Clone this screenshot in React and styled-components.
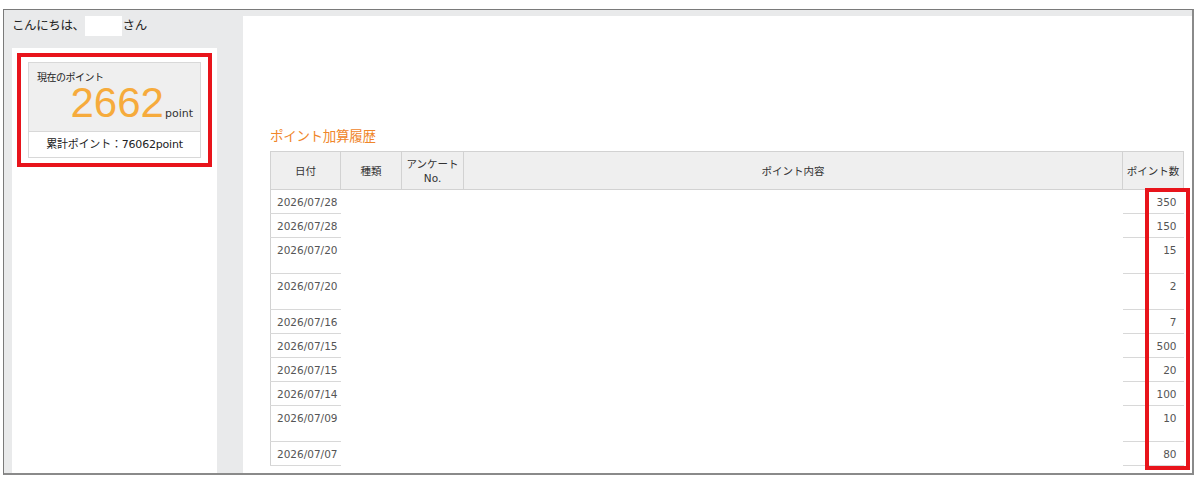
import React from "react";
import styled, { createGlobalStyle } from "styled-components";

const rows = [
  { date: "2026/07/28", point: 350 },
  { date: "2026/07/28", point: 150 },
  { date: "2026/07/20", point: 15, tall: true },
  { date: "2026/07/20", point: 2, tall: true },
  { date: "2026/07/16", point: 7 },
  { date: "2026/07/15", point: 500 },
  { date: "2026/07/15", point: 20 },
  { date: "2026/07/14", point: 100 },
  { date: "2026/07/09", point: 10, tall: true },
  { date: "2026/07/07", point: 80 },
];

export default function App() {
  return (
    <>
      <GlobalStyle />
      <Frame>
        <LeftColumn>
          <Greeting>
            こんにちは、<NameBox />さん
          </Greeting>
          <Sidebar>
            <Highlight>
              <PointCard>
                <PointTop>
                  <PointLabel>現在のポイント</PointLabel>
                  <PointValue>
                    2662<Unit>point</Unit>
                  </PointValue>
                </PointTop>
                <PointTotal>累計ポイント：76062point</PointTotal>
              </PointCard>
            </Highlight>
          </Sidebar>
        </LeftColumn>

        <Main>
          <Title>ポイント加算履歴</Title>
          <Table>
            <colgroup>
              <col style={{ width: 70 }} />
              <col style={{ width: 61 }} />
              <col style={{ width: 62 }} />
              <col />
              <col style={{ width: 61 }} />
            </colgroup>
            <thead>
              <tr>
                <Th>日付</Th>
                <Th>種類</Th>
                <Th>
                  アンケート
                  <br />
                  No.
                </Th>
                <Th>ポイント内容</Th>
                <Th>ポイント数</Th>
              </tr>
            </thead>
            <tbody>
              {rows.map((r, i) => (
                <Row key={i} $tall={r.tall}>
                  <DateCell>{r.date}</DateCell>
                  <Td />
                  <Td />
                  <Td />
                  <NumCell>{r.point}</NumCell>
                </Row>
              ))}
            </tbody>
          </Table>
          <ColumnMark />
        </Main>
      </Frame>
    </>
  );
}

const GlobalStyle = createGlobalStyle`
  body {
    margin: 0;
    background: #ffffff;
    font-family: "DejaVu Sans", "Noto Sans CJK JP", sans-serif;
    color: #333;
  }
`;

const Frame = styled.div`
  box-sizing: border-box;
  margin: 9px 0 0 3px;
  width: 1191px;
  height: 466px;
  display: flex;
  padding: 6px 0 0 8px;
  background: #e9eaeb;
  border-top: 1px solid #7a7a7a;
  border-left: 1px solid #7a7a7a;
  border-right: 2px solid #8a8a8a;
  border-bottom: 2px solid #8a8a8a;
  overflow: hidden;
`;

const LeftColumn = styled.div`
  width: 205px;
  display: flex;
  flex-direction: column;
`;

const Greeting = styled.div`
  height: 32px;
  font-family: "Noto Sans CJK JP", sans-serif;
  font-size: 12.5px;
  line-height: 18px;
  color: #222;
  letter-spacing: -0.4px;
`;

const NameBox = styled.span`
  display: inline-block;
  width: 37px;
  height: 20px;
  margin: 0 1px 0 0;
  background: #fff;
  vertical-align: -6px;
`;

const Sidebar = styled.div`
  flex: 1;
  background: #fff;
  padding: 5px 0 0 5px;
`;

const Highlight = styled.div`
  width: 195px;
  box-sizing: border-box;
  border: 4px solid #e8141b;
  padding: 5px 7px 5px 7px;
`;

const PointCard = styled.div`
  border: 1px solid #d8d8d8;
  background: #fff;
`;

const PointTop = styled.div`
  background: #efefef;
  border-bottom: 1px solid #d8d8d8;
  padding: 8px 8px 4px 8px;
  height: 56px;
`;

const PointLabel = styled.div`
  font-family: "Noto Sans CJK JP", sans-serif;
  font-size: 10px;
  line-height: 12px;
  color: #222;
  letter-spacing: -0.5px;
`;

const PointValue = styled.div`
  margin: 4px -1px 0 0;
  text-align: right;
  font-family: "Liberation Sans", sans-serif;
  font-size: 42px;
  line-height: 32px;
  color: #f6ab3c;
`;

const Unit = styled.span`
  font-family: "DejaVu Sans", sans-serif;
  font-size: 11px;
  color: #333;
  margin-left: 1px;
`;

const PointTotal = styled.div`
  text-align: center;
  font-size: 11px;
  line-height: 25px;
  color: #222;
  letter-spacing: -0.2px;
`;

const Main = styled.div`
  position: relative;
  flex: 1;
  margin-left: 26px;
  background: #fff;
  padding: 109px 6px 0 27px;
`;

const Title = styled.div`
  font-family: "Noto Sans CJK JP", sans-serif;
  font-size: 13.5px;
  line-height: 20px;
  color: #f0862a;
  margin-bottom: 6px;
  letter-spacing: -0.3px;
`;

const Table = styled.table`
  width: 914px;
  border-collapse: collapse;
  table-layout: fixed;
  font-size: 10.5px;
  color: #555;
`;

const Th = styled.th`
  height: 37px;
  padding: 0;
  background: #efefef;
  border: 1px solid #d2d2d2;
  font-weight: normal;
  font-family: "DejaVu Sans", "Noto Sans CJK JP", sans-serif;
  font-size: 10.5px;
  line-height: 14px;
  color: #333;
  text-align: center;
  vertical-align: middle;
`;

const Row = styled.tr`
  height: ${(p) => (p.$tall ? "36px" : "24px")};
`;

const Td = styled.td`
  padding: 0;
  vertical-align: top;
`;

const DateCell = styled(Td)`
  padding: 5px 0 0 6px;
  line-height: 14px;
  border-left: 1px solid #d2d2d2;
  border-bottom: 1px solid #d8d8d8;
`;

const NumCell = styled(Td)`
  padding: 5px 7px 0 0;
  line-height: 14px;
  text-align: right;
  border-bottom: 1px solid #d8d8d8;
`;

const ColumnMark = styled.div`
  position: absolute;
  left: 902px;
  top: 172px;
  width: 45px;
  height: 282px;
  box-sizing: border-box;
  border: 4px solid #e8141b;
`;
